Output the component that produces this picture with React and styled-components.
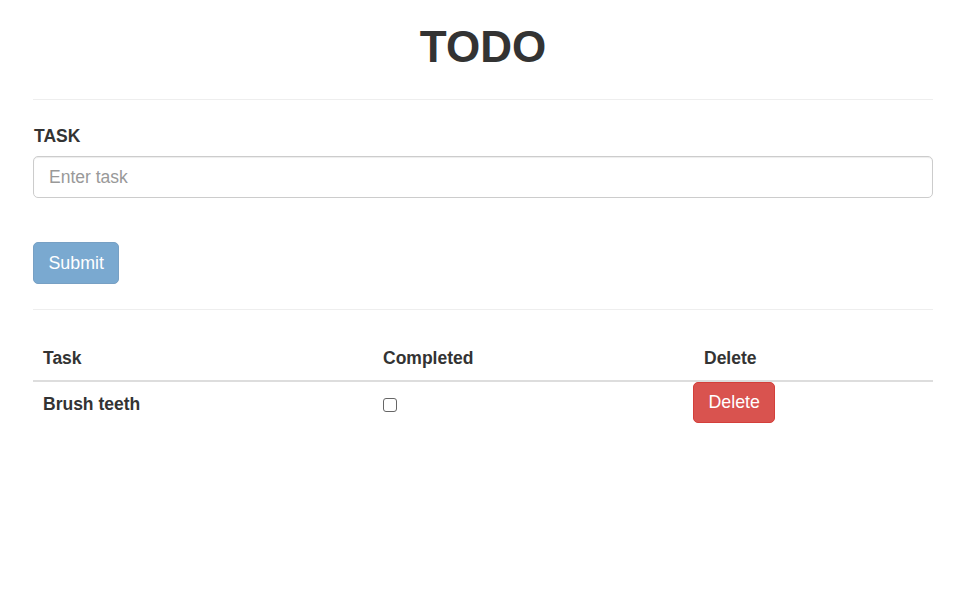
import React, { useState } from "react";
import styled, { createGlobalStyle } from "styled-components";

const GlobalStyle = createGlobalStyle`
  * {
    box-sizing: border-box;
  }
  body {
    margin: 0;
    background: #fff;
    color: #333;
    font-family: "Liberation Sans", Arial, Helvetica, sans-serif;
    font-size: 17.5px;
    line-height: 1.42857;
  }
`;

export default function App() {
  const [task, setTask] = useState("");
  const [todos, setTodos] = useState([{ title: "Brush teeth", completed: false }]);

  const toggle = (index) => {
    setTodos(todos.map((t, i) => (i === index ? { ...t, completed: !t.completed } : t)));
  };

  const remove = (index) => {
    setTodos(todos.filter((_, i) => i !== index));
  };

  return (
    <Container>
      <GlobalStyle />
      <Title>TODO</Title>
      <Rule />
      <Form onSubmit={(e) => e.preventDefault()}>
        <Label htmlFor="task">TASK</Label>
        <TextInput
          id="task"
          placeholder="Enter task"
          value={task}
          onChange={(e) => setTask(e.target.value)}
        />
        <SubmitButton type="submit" disabled={!task}>
          Submit
        </SubmitButton>
      </Form>
      <Rule $spaced />
      <Table>
        <colgroup>
          <col style={{ width: 340 }} />
          <col style={{ width: 321 }} />
          <col />
        </colgroup>
        <thead>
          <tr>
            <HeadCell>Task</HeadCell>
            <HeadCell>Completed</HeadCell>
            <HeadCell>Delete</HeadCell>
          </tr>
        </thead>
        <tbody>
          {todos.map((todo, index) => (
            <tr key={index}>
              <Cell $bold>{todo.title}</Cell>
              <Cell>
                <Check
                  type="checkbox"
                  checked={todo.completed}
                  onChange={() => toggle(index)}
                />
              </Cell>
              <Cell $flush>
                <DeleteButton onClick={() => remove(index)}>Delete</DeleteButton>
              </Cell>
            </tr>
          ))}
        </tbody>
      </Table>
    </Container>
  );
}

const Container = styled.div`
  width: 900px;
  margin-left: 33px;
`;

const Title = styled.h1`
  margin: 23px 0 0;
  text-align: center;
  font-size: 44px;
  line-height: 1.1;
  font-weight: 700;
  color: #333;
`;

const Rule = styled.hr`
  margin: ${(p) => (p.$spaced ? "25px 0 23px" : "28px 0 0")};
  border: 0;
  border-top: 1px solid #eee;
  height: 0;
`;

const Form = styled.form`
  display: flex;
  flex-direction: column;
  align-items: flex-start;
  padding-top: 25px;
`;

const Label = styled.label`
  display: block;
  font-weight: 700;
  font-size: 17.5px;
  line-height: 22px;
  margin-left: 1px;
  margin-bottom: 9px;
`;

const TextInput = styled.input`
  width: 100%;
  height: 42px;
  padding: 1px 15px 0;
  font-family: inherit;
  font-size: 17.5px;
  color: #555;
  border: 1px solid #ccc;
  border-radius: 5px;
  box-shadow: inset 0 1px 1px rgba(0, 0, 0, 0.075);
  outline: none;

  &::placeholder {
    color: #999;
  }
`;

const BaseButton = styled.button`
  height: 42px;
  padding: 0 14.5px;
  font-family: inherit;
  font-size: 17.8px;
  line-height: 40px;
  color: #fff;
  border-radius: 5px;
  cursor: pointer;
`;

const SubmitButton = styled(BaseButton)`
  margin-top: 44px;
  background: #7aa9d0;
  border: 1px solid #77a0c4;

  &:disabled {
    cursor: not-allowed;
  }
  &:not(:disabled) {
    background: #337ab7;
    border-color: #2e6da4;
  }
`;

const DeleteButton = styled(BaseButton)`
  height: 41px;
  line-height: 39px;
  margin-left: -1px;
  background: #d9534f;
  border: 1px solid #d43f3a;
`;

const Table = styled.table`
  width: 100%;
  table-layout: fixed;
  border-collapse: collapse;
  border-spacing: 0;
`;

const HeadCell = styled.th`
  text-align: left;
  font-weight: 700;
  font-size: 17.5px;
  line-height: 25px;
  padding: 13px 10px 9px;
  vertical-align: bottom;
  border-bottom: 2px solid #ddd;
`;

const Cell = styled.td`
  padding: ${(p) => (p.$flush ? "0" : "10px 10px 6px")};
  vertical-align: middle;
  font-weight: ${(p) => (p.$bold ? 700 : 400)};
  font-size: 17.5px;
  line-height: 25px;
`;

const Check = styled.input`
  appearance: none;
  display: block;
  width: 14px;
  height: 14px;
  margin: 0;
  border: 1px solid #666;
  border-radius: 3px;
  background: #fff;
  cursor: pointer;

  &:checked {
    background: #0075ff;
    border-color: #0075ff;
  }
`;
